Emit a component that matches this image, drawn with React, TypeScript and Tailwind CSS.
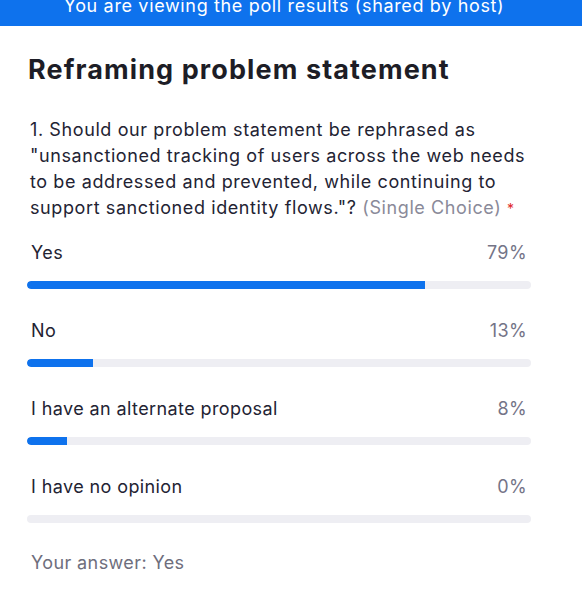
import React from 'react'

interface Option {
  label: string
  percent: number
}

const options: Option[] = [
  { label: 'Yes', percent: 79 },
  { label: 'No', percent: 13 },
  { label: 'I have an alternate proposal', percent: 8 },
  { label: 'I have no opinion', percent: 0 },
]

export default function App() {
  return (
    <div className="min-h-screen w-[582px] h-[614px] bg-white overflow-hidden font-['Inter','Liberation_Sans',sans-serif]">
      {/* banner, cut off at the top */}
      <div className="h-[26px] bg-[#0e72ed] overflow-hidden flex justify-center">
        <span className="text-white text-[18px] leading-[20px] tracking-[0.65px] -mt-[4px] pr-[14px] whitespace-nowrap">
          You are viewing the poll results (shared by host)
        </span>
      </div>

      <div className="px-[27px]">
        <h1 className="mt-[27px] text-[27px] leading-[33px] font-bold text-[#1d1d26] tracking-[1.1px] pl-[1px]">
          Reframing problem statement
        </h1>

        <p className="mt-[31px] w-[500px] text-[18px] leading-[26px] tracking-[0.6px] text-[#232333] pl-[3px]">
          1. Should our problem statement be rephrased as "unsanctioned tracking of users across the web needs to be addressed and prevented, while continuing to support sanctioned identity flows."?{' '}
          <span className="text-[#8a8a99]">(Single Choice)</span>{' '}
          <span className="text-[#e02828] text-[14px]">*</span>
        </p>

        <div className="mt-[19px] flex flex-col gap-[30px] w-[504px]">
          {options.map(o => (
            <div key={o.label}>
              <div className="flex justify-between h-6 items-center text-[18px] leading-6 tracking-[0.4px] pl-[4px] pr-[4px]">
                <span className="text-[#232333]">{o.label}</span>
                <span className="text-[#747487]">{o.percent}%</span>
              </div>
              <div className="mt-4 h-2 rounded-full bg-[#eeeef3] overflow-hidden">
                <div
                  className="h-full bg-[#0e72ed] rounded-l-full"
                  style={{ width: `${o.percent}%` }}
                />
              </div>
            </div>
          ))}
        </div>

        <p className="mt-[28px] text-[18px] leading-6 tracking-[0.4px] text-[#6e6e7d] pl-[4px]">
          Your answer: Yes
        </p>
      </div>
    </div>
  )
}
